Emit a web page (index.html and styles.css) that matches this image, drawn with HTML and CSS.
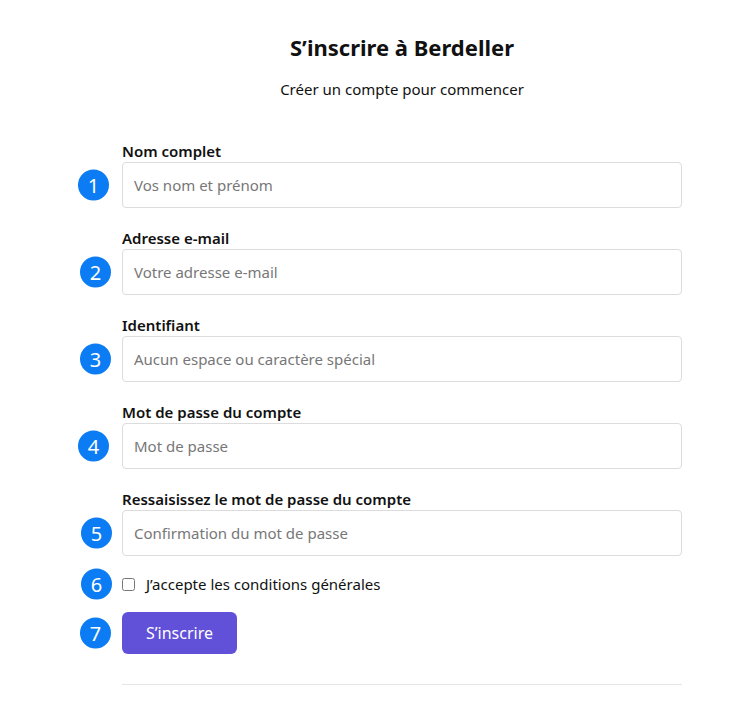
FILE: index.html
```html
<!DOCTYPE html>
<html lang="fr">
<head>
<meta charset="utf-8">
<title>S’inscrire à Berdeller</title>
<link rel="stylesheet" href="styles.css">
</head>
<body>
<main class="page">
  <header class="head">
    <h1 class="title">S’inscrire à Berdeller</h1>
    <p class="subtitle">Créer un compte pour commencer</p>
  </header>
  <form class="form">
    <div class="field">
      <label class="label" for="f1">Nom complet</label>
      <div class="control">
        <span class="badge b1">1</span>
        <input class="input" id="f1" type="text" placeholder="Vos nom et prénom">
      </div>
    </div>
    <div class="field">
      <label class="label" for="f2">Adresse e-mail</label>
      <div class="control">
        <span class="badge b2">2</span>
        <input class="input" id="f2" type="email" placeholder="Votre adresse e-mail">
      </div>
    </div>
    <div class="field">
      <label class="label" for="f3">Identifiant</label>
      <div class="control">
        <span class="badge b3">3</span>
        <input class="input" id="f3" type="text" placeholder="Aucun espace ou caractère spécial">
      </div>
    </div>
    <div class="field">
      <label class="label" for="f4">Mot de passe du compte</label>
      <div class="control">
        <span class="badge b4">4</span>
        <input class="input" id="f4" type="password" placeholder="Mot de passe">
      </div>
    </div>
    <div class="field field-last">
      <label class="label" for="f5">Ressaisissez le mot de passe du compte</label>
      <div class="control">
        <span class="badge b5">5</span>
        <input class="input" id="f5" type="password" placeholder="Confirmation du mot de passe">
      </div>
    </div>
    <div class="check-row">
      <span class="badge b6">6</span>
      <input class="check" id="f6" type="checkbox">
      <label class="check-label" for="f6">J’accepte les conditions générales</label>
    </div>
    <div class="submit-row">
      <span class="badge b7">7</span>
      <button class="btn" type="button">S’inscrire</button>
    </div>
  </form>
  <hr class="rule">
</main>
</body>
</html>
```
FILE: styles.css
```css
* { box-sizing: border-box; }
body {
  margin: 0;
  background: #fff;
  color: #111;
  font-family: "Noto Sans", "Open Sans", sans-serif;
}
.page {
  width: 560px;
  margin-left: 122px;
  padding-top: 30px;
}
.head { text-align: center; }
.title {
  margin: 0;
  font-size: 22px;
  font-weight: 700;
  line-height: 34px;
}
.subtitle {
  margin: 14px 0 0;
  font-size: 15px;
  line-height: 22px;
}
.form {
  margin-top: 40px;
  display: flex;
  flex-direction: column;
}
.field {
  display: flex;
  flex-direction: column;
  margin-bottom: 19px;
}
.field-last { margin-bottom: 13px; }
.label {
  font-size: 15px;
  font-weight: 600;
  line-height: 22px;
}
.control { position: relative; }
.input {
  width: 100%;
  height: 46px;
  border: 1px solid #dcdcdc;
  border-radius: 4px;
  padding: 0 11px;
  font-family: inherit;
  font-size: 15px;
  color: #222;
  background: #fff;
}
.input::placeholder { color: #777; }
.badge {
  position: absolute;
  top: 50%;
  left: -44px;
  transform: translateY(-50%);
  width: 31px;
  height: 31px;
  border-radius: 50%;
  background: #0b7cf4;
  color: #fff;
  font-size: 20px;
  line-height: 31px;
  text-align: center;
}
.b1, .b4 { left: -44px; }
.b2 { left: -42px; }
.b3, .b7 { left: -42px; }
.b5, .b6 { left: -41px; }
.check-row {
  position: relative;
  display: flex;
  align-items: center;
  height: 30px;
}
.check {
  margin: 0;
  width: 13px;
  height: 13px;
}
.check-label {
  margin-left: 11px;
  font-size: 15px;
}
.submit-row {
  position: relative;
  margin-top: 13px;
}
.btn {
  height: 42px;
  padding: 0 24px;
  border: 0;
  border-radius: 6px;
  background: #6150d8;
  color: #fff;
  font-family: inherit;
  font-size: 16px;
}
.rule {
  margin: 30px 0 0;
  border: 0;
  border-top: 1px solid #e6e6e6;
}
```
